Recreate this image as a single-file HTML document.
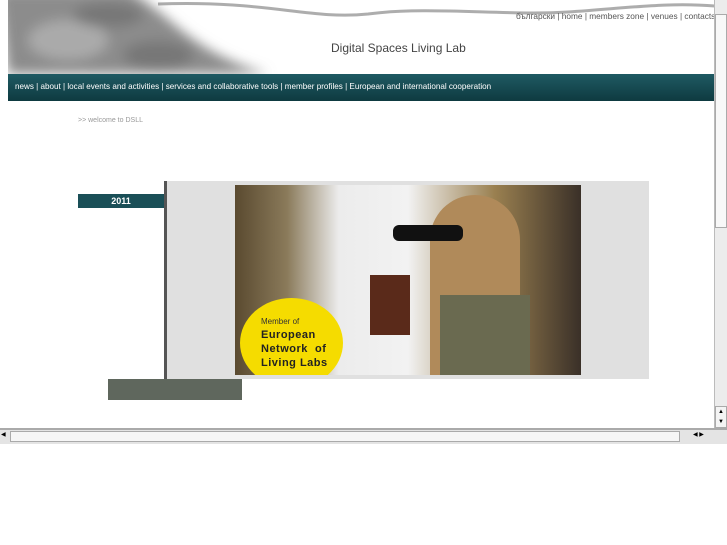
<!DOCTYPE html>
<html><head><meta charset="utf-8"><style>
*{margin:0;padding:0;box-sizing:border-box}
body{width:727px;height:545px;background:#fff;font-family:"Liberation Sans",sans-serif;position:relative;overflow:hidden}
.a{position:absolute}
</style></head><body>
<svg class="a" style="left:8px;top:0" width="707" height="74">
<defs><filter id="b"><feGaussianBlur stdDeviation="6"/></filter></defs>
<g filter="url(#b)">
<path d="M-10 -10 L120 -10 C170 20 180 50 260 74 L0 74 Z" fill="#8c8c8c"/>
<ellipse cx="60" cy="40" rx="40" ry="20" fill="#aaa"/>
<ellipse cx="150" cy="55" rx="35" ry="14" fill="#777"/>
<ellipse cx="100" cy="15" rx="35" ry="12" fill="#777"/>
</g>
<path d="M150 4 C260 0 300 20 360 14 C420 6 500 16 560 12 C620 8 660 2 707 6" stroke="#8a8a8a" stroke-width="3" fill="none" opacity=".7"/>
</svg>
<div class="a" style="left:516px;top:11px;font-size:8.3px;color:#555;white-space:nowrap">български | home | members zone | venues | contacts</div>
<div class="a" style="left:331px;top:41px;font-size:12px;color:#444">Digital Spaces Living Lab</div>
<div class="a" style="left:8px;top:74px;width:707px;height:27px;background:linear-gradient(#1f5a63,#0e3a40)"></div>
<div class="a" style="left:15px;top:82px;font-size:8.1px;color:#fff;white-space:nowrap">news | about | local events and activities | services and collaborative tools | member profiles | European and international cooperation</div>
<div class="a" style="left:78px;top:117px;font-size:7px;color:#999">&gt;&gt; welcome to DSLL</div>
<div class="a" style="left:78px;top:194px;width:86px;height:14px;background:#1a4f57;color:#fff;font-size:9px;font-weight:bold;text-align:center;line-height:14px">2011</div>
<div class="a" style="left:164px;top:181px;width:485px;height:198px;background:#e0e0e0;border-left:3px solid #555"></div>
<div class="a" style="left:235px;top:185px;width:346px;height:190px;background:linear-gradient(90deg,#5a4a30 0%,#8a7a5a 15%,#ececec 30%,#f2f2f2 50%,#9a8050 75%,#3a3028 100%);overflow:hidden">
<div class="a" style="left:135px;top:90px;width:40px;height:60px;background:#5a2a1a"></div>
<div class="a" style="left:195px;top:10px;width:90px;height:180px;border-radius:45px 45px 0 0;background:#b08a5a"></div>
<div class="a" style="left:205px;top:110px;width:90px;height:80px;background:#6a6a50"></div>
<div class="a" style="left:158px;top:40px;width:70px;height:16px;background:#111;border-radius:6px"></div>
<div class="a" style="left:5px;top:113px;width:103px;height:90px;border-radius:50%;background:#f5dc00"></div>
<div class="a" style="left:26px;top:132px;font-size:8px;color:#333">Member of</div>
<div class="a" style="left:26px;top:143px;font-size:11px;font-weight:bold;color:#222;line-height:14px;letter-spacing:.5px">European<br>Network&nbsp; of<br>Living Labs</div>
</div>
<div class="a" style="left:108px;top:379px;width:134px;height:21px;background:#5f675d"></div>
<div class="a" style="left:714px;top:0;width:13px;height:430px;background:#ececec;border-left:1px solid #bbb"></div>
<div class="a" style="left:715px;top:14px;width:12px;height:214px;background:#f8f8f8;border:1px solid #aaa"></div>
<div class="a" style="left:715px;top:406px;width:12px;height:22px;background:#f4f4f4;border:1px solid #aaa;font-size:6px;text-align:center;line-height:10px">▲<br>▼</div>
<div class="a" style="left:0;top:428px;width:727px;height:16px;background:#e4e4e4;border-top:2px solid #aaa"></div>
<div class="a" style="left:10px;top:431px;width:670px;height:11px;background:#f6f6f6;border:1px solid #aaa"></div>
<div class="a" style="left:1px;top:431px;font-size:6px">◀</div>
<div class="a" style="left:693px;top:431px;font-size:6px">◀ ▶</div>
</body></html>
